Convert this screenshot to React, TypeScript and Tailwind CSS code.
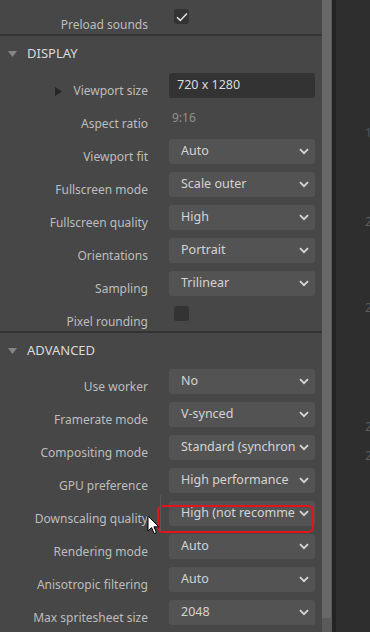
import React from "react";

const font = { fontFamily: '"Noto Sans", "Open Sans", sans-serif' };

function Chevron() {
  return (
    <svg width="10" height="7" viewBox="0 0 10 7" className="shrink-0">
      <path d="M1 1.2 L5 5.2 L9 1.2" fill="none" stroke="#d6d6d6" strokeWidth="1.8" />
    </svg>
  );
}

function Label({ text, caret }: { text: string; caret?: boolean }) {
  return (
    <div className="w-[148px] shrink-0 flex justify-end items-center pt-[3px] leading-[20px] text-[#bdbdbd]">
      {caret && (
        <svg width="7" height="9" viewBox="0 0 7 9" className="mr-[11px] mt-[1px]">
          <path d="M0 0 L7 4.5 L0 9 Z" fill="#262626" />
        </svg>
      )}
      <span className="whitespace-nowrap">{text}</span>
    </div>
  );
}

function SelectRow({ label, value }: { label: string; value: string }) {
  return (
    <div className="flex h-[33px] gap-[21px]">
      <Label text={label} />
      <div className="w-[146px] h-[25px] rounded-[3px] bg-[#535353] flex items-center pl-[12px] pr-[6px] gap-1">
        <span className="flex-1 overflow-hidden whitespace-nowrap text-[12.5px] text-[#d4d4d4]">{value}</span>
        <Chevron />
      </div>
    </div>
  );
}

function CheckRow({ label, checked }: { label: string; checked?: boolean }) {
  return (
    <div className="flex h-[33px] gap-[21px]">
      <Label text={label} />
      <div className="pt-[2px] pl-[5px]">
        <div className="w-[15px] h-[15px] rounded-[3px] bg-[#333333] flex items-center justify-center">
          {checked && (
            <svg width="12" height="10" viewBox="0 0 12 10">
              <path d="M1 5.2 L4.3 8.4 L11 1.4" fill="none" stroke="#e6e6e6" strokeWidth="1.5" />
            </svg>
          )}
        </div>
      </div>
    </div>
  );
}

function Header({ title }: { title: string }) {
  return (
    <div className="flex items-center h-[36px] pl-[8px] gap-[10px] text-[13px] text-[#dadada]">
      <svg width="9" height="6" viewBox="0 0 9 6">
        <path d="M0 0 L9 0 L4.5 6 Z" fill="#858585" />
      </svg>
      <span>{title}</span>
    </div>
  );
}

function Divider() {
  return <div className="h-[2px] bg-[#333333]" />;
}

export default function App() {
  return (
    <div className="relative flex h-[632px] w-[370px] overflow-hidden bg-[#2e2e2e] text-[12px]" style={font}>
      <div className="w-[322px] shrink-0 bg-[#474747]">
        <div className="pt-[7px]">
          <CheckRow label="Preload sounds" checked />
        </div>
        <div className="-mt-[6px]">
          <Divider />
        </div>
        <Header title="DISPLAY" />
        <div className="pt-[1px]">
          <div className="flex h-[33px] gap-[21px]">
            <Label text="Viewport size" caret />
            <div className="w-[146px] h-[25px] rounded-[3px] bg-[#333333] flex items-center pl-[8px] text-[12.5px] text-[#dcdcdc]">
              720 x 1280
            </div>
          </div>
          <div className="flex h-[33px] gap-[21px]">
            <Label text="Aspect ratio" />
            <div className="pt-[2px] pl-[3px] leading-[20px] text-[#8f8f8f]">9:16</div>
          </div>
          <SelectRow label="Viewport fit" value="Auto" />
          <SelectRow label="Fullscreen mode" value="Scale outer" />
          <SelectRow label="Fullscreen quality" value="High" />
          <SelectRow label="Orientations" value="Portrait" />
          <SelectRow label="Sampling" value="Trilinear" />
          <CheckRow label="Pixel rounding" />
        </div>
        <div className="-mt-[6px]">
          <Divider />
        </div>
        <Header title="ADVANCED" />
        <SelectRow label="Use worker" value="No" />
        <SelectRow label="Framerate mode" value="V-synced" />
        <SelectRow label="Compositing mode" value="Standard (synchronized)" />
        <SelectRow label="GPU preference" value="High performance" />
        <SelectRow label="Downscaling quality" value="High (not recommended)" />
        <SelectRow label="Rendering mode" value="Auto" />
        <SelectRow label="Anisotropic filtering" value="Auto" />
        <SelectRow label="Max spritesheet size" value="2048" />
        <SelectRow label="WebGL version" value="Auto" />
      </div>

      <div className="w-[10px] shrink-0 bg-[#5a5a5a] flex flex-col">
        <div className="h-[618px] w-[9px] bg-[#686868]" />
      </div>
      <div className="w-[4px] shrink-0 bg-[#242424]" />

      <div className="flex-1 flex flex-col text-[12px] leading-[16px] text-[#5c5c5c]">
        <div className="w-full pl-[29px]">
          <div className="mt-[125px] text-[#4a5663]">1</div>
          <div className="mt-[73px]">2</div>
          <div className="mt-[70px]">2</div>
          <div className="mt-[103px]">2</div>
          <div className="mt-[13px]">2</div>
        </div>
      </div>

      {/* selection highlight over the Downscaling quality field */}
      <div className="absolute left-[157px] top-[505px] w-[157px] h-[28px] rounded-[6px] border-2 border-[#e3141c]" />
      <div className="absolute left-[160px] top-[495px] w-px h-[36px] bg-[#575757]" />
      <svg className="absolute left-[147px] top-[515px]" width="13" height="21" viewBox="0 0 13 21">
        <path d="M1 1 L1 16 L4.6 12.6 L7.2 18.6 L9.4 17.6 L6.9 11.8 L11.8 11.8 Z" fill="#ffffff" stroke="#000000" strokeWidth="1" strokeLinejoin="round" />
      </svg>
    </div>
  );
}
